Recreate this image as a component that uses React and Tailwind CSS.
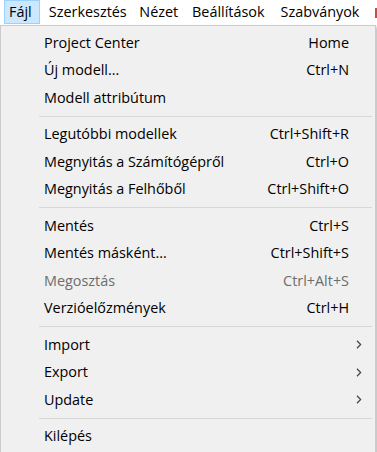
import React from "react";

const bar = [
  { label: "Fájl", w: "w-[36px]", active: true },
  { label: "Szerkesztés", w: "w-[91px]" },
  { label: "Nézet", w: "w-[53px]" },
  { label: "Beállítások", w: "w-[89px]" },
  { label: "Szabványok", w: "w-[94px]" },
];

const groups = [
  [
    { label: "Project Center", key: "Home" },
    { label: "Új modell...", key: "Ctrl+N" },
    { label: "Modell attribútum" },
  ],
  [
    { label: "Legutóbbi modellek", key: "Ctrl+Shift+R" },
    { label: "Megnyitás a Számítógépről", key: "Ctrl+O" },
    { label: "Megnyitás a Felhőből", key: "Ctrl+Shift+O" },
  ],
  [
    { label: "Mentés", key: "Ctrl+S" },
    { label: "Mentés másként...", key: "Ctrl+Shift+S" },
    { label: "Megosztás", key: "Ctrl+Alt+S", disabled: true },
    { label: "Verzióelőzmények", key: "Ctrl+H" },
  ],
  [
    { label: "Import", sub: true },
    { label: "Export", sub: true },
    { label: "Update", sub: true },
  ],
  [{ label: "Kilépés" }],
];

const Chevron = () => (
  <svg width="6" height="9" viewBox="0 0 6 9" className="ml-[7px]">
    <polyline points="1,0.8 4.6,4.5 1,8.2" fill="none" stroke="#4a4a4a" strokeWidth="1.3" />
  </svg>
);

const Row = ({ item }) => (
  <div
    className={`flex h-[27.5px] items-center pl-[43px] ${
      item.disabled ? "text-[#6d6d6d]" : "text-black"
    }`}
  >
    <span className="flex-1">{item.label}</span>
    {item.key && <span>{item.key}</span>}
    <span className="flex w-[26px] items-center">{item.sub && <Chevron />}</span>
  </div>
);

export default function App() {
  return (
    <div
      className="relative h-[452px] w-[377px] overflow-hidden bg-white text-[14.4px] leading-none"
      style={{ fontFamily: "'Segoe UI', 'Open Sans', sans-serif" }}
    >
      {/* menu bar */}
      <div className="flex h-[25px] pl-[4px]">
        {bar.map((b) => (
          <div
            key={b.label}
            className={`${b.w} flex h-[24px] items-center ${
              b.active ? "border border-[#99d1ff] bg-[#cce8ff] pl-[4px]" : "pl-[9px]"
            }`}
          >
            {b.label}
          </div>
        ))}
        <div className="ml-[10px] mt-[8px] h-[10px] w-[2px] bg-[#c0504d]" />
      </div>

      {/* dropdown */}
      <div className="w-[376px] border border-[#cccccc] bg-[#f0f0f0] pt-[3px] pb-[6px] shadow-[2px_2px_3px_rgba(0,0,0,0.25)]">
        {groups.map((g, i) => (
          <div key={i}>
            {i > 0 && (
              <div className="flex h-[9px] items-center pl-[38px] pr-[3px]">
                <div className="h-px flex-1 bg-[#d7d7d7]" />
              </div>
            )}
            {g.map((item) => (
              <Row key={item.label} item={item} />
            ))}
          </div>
        ))}
      </div>
    </div>
  );
}
